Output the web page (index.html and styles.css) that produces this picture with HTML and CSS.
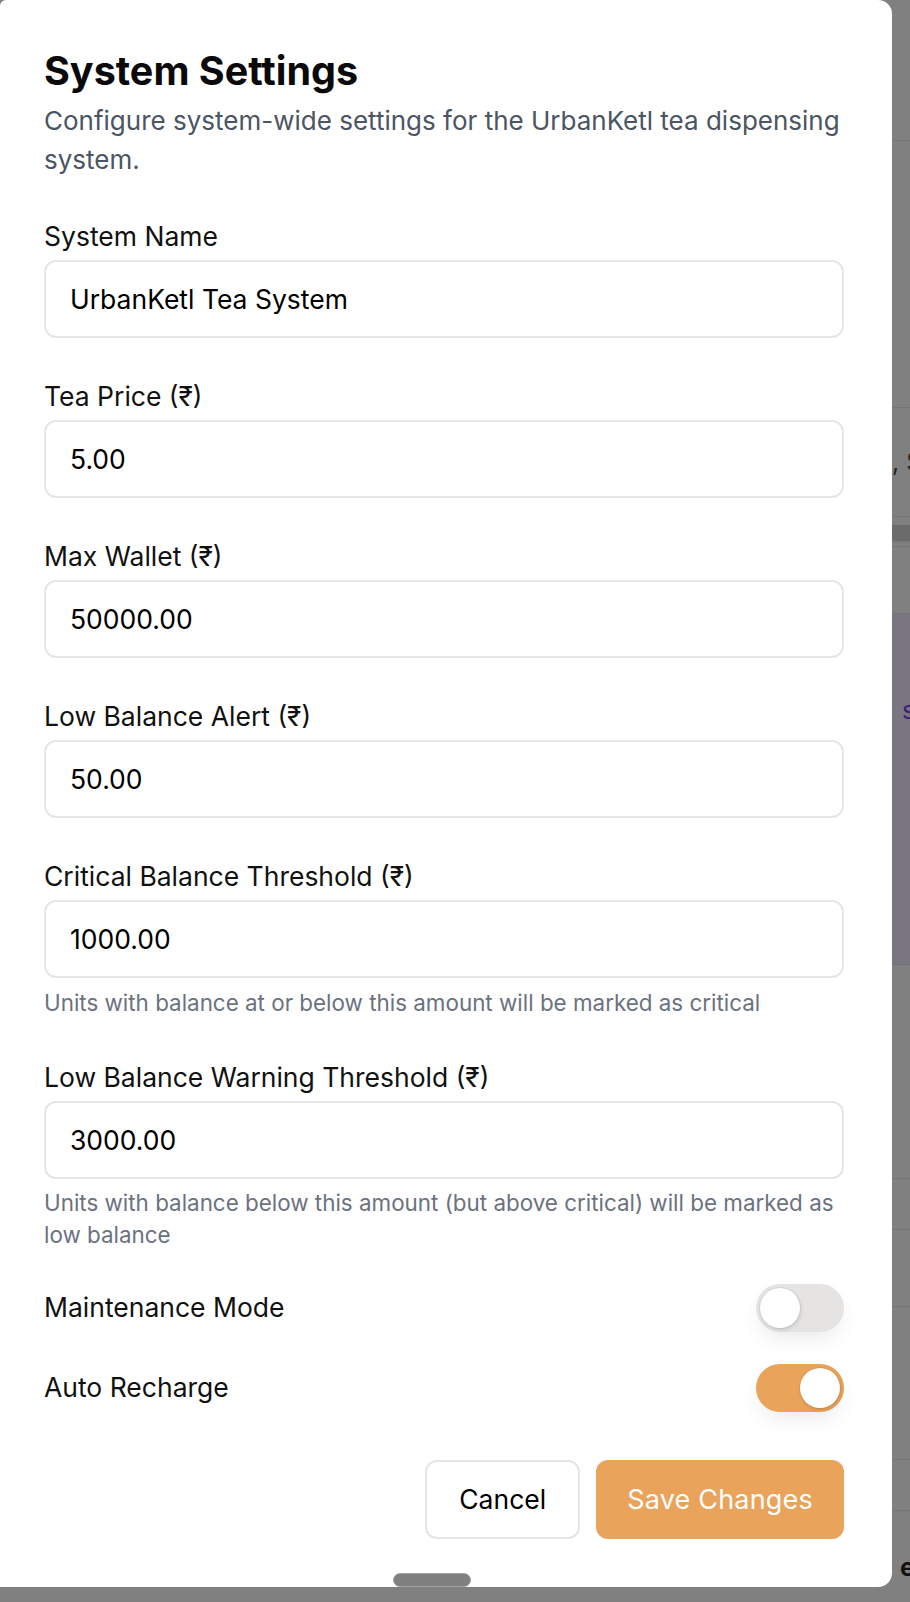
FILE: index.html
```html
<!DOCTYPE html>
<html lang="en">
<head>
<meta charset="utf-8">
<title>System Settings</title>
<link rel="stylesheet" href="styles.css">
</head>
<body>
  <div class="page">
    <div class="bg-row r1"></div>
    <div class="bg-row r2"></div>
    <div class="bg-row r3"><span class="frag frag-dark">, S</span></div>
    <div class="bg-gap g1"></div>
    <div class="bg-band"></div>
    <div class="bg-row r4"></div>
    <div class="bg-row r5"></div>
    <div class="bg-tint"><span class="frag frag-purple">s</span></div>
    <div class="bg-row r6"></div>
    <div class="bg-row r7"></div>
    <div class="bg-row r8"></div>
    <div class="bg-row r9"></div>
    <div class="bg-row r10"></div>
    <div class="bg-row r11"><span class="frag frag-bold">e</span></div>
  </div>

  <div class="sheet">
    <h2 class="title">System Settings</h2>
    <p class="subtitle">Configure system-wide settings for the UrbanKetl tea dispensing system.</p>

    <div class="fields">
      <div class="field">
        <label class="label" for="f1">System Name</label>
        <input class="input" id="f1" type="text" value="UrbanKetl Tea System" readonly>
      </div>
      <div class="field">
        <label class="label" for="f2">Tea Price (₹)</label>
        <input class="input" id="f2" type="text" value="5.00" readonly>
      </div>
      <div class="field">
        <label class="label" for="f3">Max Wallet (₹)</label>
        <input class="input" id="f3" type="text" value="50000.00" readonly>
      </div>
      <div class="field">
        <label class="label" for="f4">Low Balance Alert (₹)</label>
        <input class="input" id="f4" type="text" value="50.00" readonly>
      </div>
      <div class="field">
        <label class="label" for="f5">Critical Balance Threshold (₹)</label>
        <input class="input" id="f5" type="text" value="1000.00" readonly>
        <p class="hint">Units with balance at or below this amount will be marked as critical</p>
      </div>
      <div class="field">
        <label class="label" for="f6">Low Balance Warning Threshold (₹)</label>
        <input class="input" id="f6" type="text" value="3000.00" readonly>
        <p class="hint">Units with balance below this amount (but above critical) will be marked as low balance</p>
      </div>
    </div>

    <div class="switches">
      <div class="switch-row">
        <span class="switch-label">Maintenance Mode</span>
        <span class="toggle"><span class="knob"></span></span>
      </div>
      <div class="switch-row">
        <span class="switch-label">Auto Recharge</span>
        <span class="toggle on"><span class="knob"></span></span>
      </div>
    </div>

    <div class="actions">
      <button class="btn btn-cancel" type="button">Cancel</button>
      <button class="btn btn-save" type="button">Save Changes</button>
    </div>

    <div class="scroll-thumb"></div>
  </div>
</body>
</html>
```
FILE: styles.css
```css
html, body {
  margin: 0;
  padding: 0;
}

body {
  width: 910px;
  height: 1602px;
  overflow: hidden;
  background: #808080;
  font-family: Inter, "Noto Sans", "Liberation Sans", sans-serif;
  position: relative;
}

/* underlying page seen through the dim overlay */
.page {
  display: flex;
  flex-direction: column;
  width: 910px;
}

.bg-row {
  border-bottom: 1px solid #757575;
  box-sizing: border-box;
  display: flex;
  align-items: center;
  overflow: hidden;
  white-space: nowrap;
}

.r1 { height: 141px; }
.r2 { height: 267px; }
.r3 { height: 109px; }
.g1 { height: 8px; }
.bg-band { height: 16px; background: #6b6b6b; border-bottom: 2px solid #7a7a7a; }
.r4 { height: 4px; }
.r5 { height: 67px; }
.bg-tint {
  height: 351px;
  background: #79767f;
  border-bottom: 1px solid #727078;
  box-sizing: border-box;
  display: flex;
  align-items: flex-start;
  padding-top: 80px;
  white-space: nowrap;
  overflow: hidden;
}
.r6 { height: 214px; }
.r7 { height: 51px; }
.r8 { height: 77px; }
.r9 { height: 153px; }
.r10 { height: 51px; }
.r11 { height: 80px; border-bottom: 0; align-items: flex-start; padding-top: 40px; }

.frag {
  padding-left: 892px;
  font-size: 25px;
  line-height: 32px;
}
.frag-dark { color: #262626; }
.frag-purple { padding-left: 902px; color: #3f1f7a; }
.frag-bold { padding-left: 900px; color: #111; font-weight: 700; }

/* settings sheet */
.sheet {
  position: absolute;
  left: 0;
  top: 0;
  width: 892px;
  height: 1587px;
  box-sizing: border-box;
  padding: 47px 48px 0 44px;
  background: #ffffff;
  border-radius: 6px 14px 14px 0;
}

.title {
  margin: 0;
  font-size: 39.5px;
  line-height: 48px;
  font-weight: 700;
  color: #0a0a0a;
}

.subtitle {
  margin: 6px -20px 0 0;
  font-size: 26px;
  line-height: 39px;
  color: #4b5563;
}

.fields {
  margin-top: 38px;
  display: flex;
  flex-direction: column;
  gap: 38.8px;
}

.field {
  display: flex;
  flex-direction: column;
}

.label {
  display: block;
  font-size: 26.5px;
  line-height: 38.4px;
  margin-bottom: 4.8px;
  color: #111111;
}

.input {
  display: block;
  width: 100%;
  height: 78px;
  box-sizing: border-box;
  margin: 0;
  border: 2px solid #e6e6e6;
  border-radius: 12px;
  padding: 0 24px;
  font-family: inherit;
  font-size: 26.5px;
  color: #000000;
  background: #ffffff;
  outline: none;
}

.hint {
  margin: 8.5px 0 0 0;
  font-size: 22.4px;
  line-height: 32px;
  color: #6b7280;
}

.switches {
  margin-top: 32.3px;
  display: flex;
  flex-direction: column;
  gap: 32px;
}

.switch-row {
  display: flex;
  align-items: center;
  justify-content: space-between;
  height: 48px;
}

.switch-label {
  font-size: 26.5px;
  line-height: 38.4px;
  color: #111111;
}

.toggle {
  display: flex;
  justify-content: flex-start;
  align-items: center;
  width: 88px;
  height: 48px;
  box-sizing: border-box;
  padding: 4px;
  border-radius: 24px;
  background: #e5e4e2;
  box-shadow: 0 10px 22px -6px rgba(0, 0, 0, 0.10);
}

.toggle.on {
  justify-content: flex-end;
  background: #e9a35a;
}

.knob {
  width: 40px;
  height: 40px;
  border-radius: 50%;
  background: #ffffff;
  box-shadow: 0 0 0 1px rgba(0, 0, 0, 0.05), 1px 2px 4px rgba(0, 0, 0, 0.12);
}

.actions {
  margin-top: 48px;
  display: flex;
  justify-content: flex-end;
  gap: 16px;
}

.btn {
  height: 79px;
  box-sizing: border-box;
  border-radius: 12px;
  font-family: inherit;
  font-size: 26.5px;
  margin: 0;
  cursor: pointer;
}

.btn-cancel {
  padding: 0 32px;
  border: 2px solid #e5e5e5;
  background: #ffffff;
  color: #000000;
}

.btn-save {
  padding: 0 31px;
  border: 0;
  background: #e9a35a;
  color: #ffffff;
  font-size: 27px;
  letter-spacing: 0.2px;
}

.scroll-thumb {
  position: absolute;
  left: 393px;
  bottom: 0;
  width: 78px;
  height: 14px;
  box-sizing: border-box;
  border-radius: 7px;
  background: #7f7f7f;
  border: 1px solid #a3a3a3;
}
```
